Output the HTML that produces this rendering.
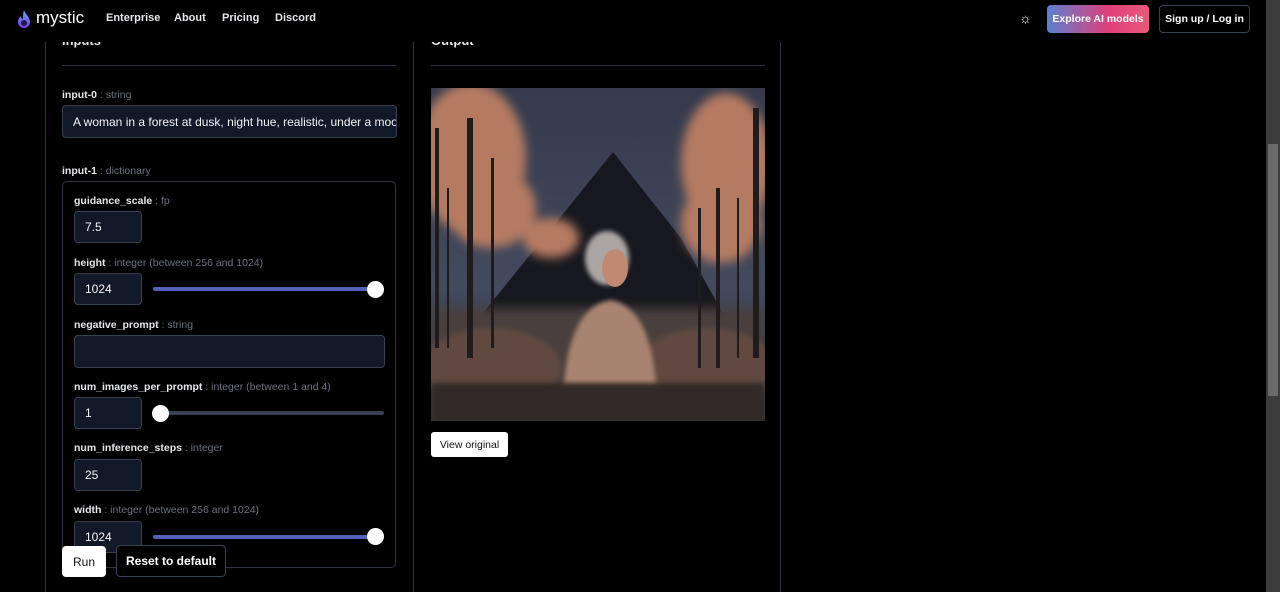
<!DOCTYPE html>
<html><head><meta charset="utf-8">
<style>
*{box-sizing:border-box;margin:0;padding:0}
body{width:1280px;height:592px;background:#000;overflow:hidden;font-family:"Liberation Sans",sans-serif;color:#fff;position:relative}
.abs{position:absolute}
.nav a{position:absolute;top:12px;font-size:11px;font-weight:bold;color:#e5e7eb}
.lbl{position:absolute;font-size:10.5px;font-weight:bold;color:#e5e7eb;white-space:nowrap}
.lbl span{font-weight:normal;color:#6b7280}
.inp{position:absolute;background:#111827;border:1px solid #374151;border-radius:4px;font-size:12px;color:#f3f4f6;padding-left:10px;display:flex;align-items:center;white-space:nowrap;overflow:hidden}
.track{position:absolute;height:4px;border-radius:2px;background:#374151}
.knob{position:absolute;width:17px;height:17px;border-radius:50%;background:#fff}
</style></head><body>
<div class="abs" style="left:45px;top:40px;width:1px;height:552px;background:#2d3340"></div>
<div class="abs" style="left:413px;top:40px;width:1px;height:552px;background:#2d3340"></div>
<div class="abs" style="left:780px;top:40px;width:1px;height:552px;background:#2d3340"></div>
<div class="abs" style="left:62px;top:33px;font-size:13px;font-weight:bold;color:#e5e7eb">Inputs</div>
<div class="abs" style="left:431px;top:33px;font-size:13px;font-weight:bold;color:#e5e7eb">Output</div>
<div class="abs" style="left:0;top:0;width:1266px;height:42px;background:#000"></div>
<svg class="abs" style="left:16px;top:9px" width="16" height="20" viewBox="0 0 16 20"><defs><linearGradient id="fl" x1="0" y1="0" x2="0" y2="1"><stop offset="0" stop-color="#60a5fa"/><stop offset="1" stop-color="#7c3aed"/></linearGradient></defs><path d="M8 1C9 5 14 8 14 13a6 6 0 0 1-12 0c0-3 2-5 3-6 0 2 1 3 2 3 0-4 0-6 1-9z" fill="url(#fl)"/><circle cx="8" cy="14" r="3" fill="#1e1b4b"/></svg>
<div class="abs" style="left:36px;top:8px;font-size:17px;color:#fff">mystic</div>
<div class="nav"><a style="left:106px">Enterprise</a><a style="left:174px">About</a><a style="left:222px">Pricing</a><a style="left:275px">Discord</a></div>
<div class="abs" style="left:1019px;top:10px;font-size:14px;color:#fff">☼</div>
<div class="abs" style="left:1047px;top:5px;width:102px;height:28px;border-radius:4px;background:linear-gradient(90deg,#5b7fd0,#e0407a 60%,#e8587a);font-size:10.5px;font-weight:bold;display:flex;align-items:center;justify-content:center;white-space:nowrap">Explore AI models</div>
<div class="abs" style="left:1159px;top:5px;width:91px;height:28px;border-radius:4px;border:1px solid #374151;font-size:10.5px;font-weight:bold;display:flex;align-items:center;justify-content:center;white-space:nowrap">Sign up / Log in</div>
<div class="abs" style="left:1266px;top:0;width:14px;height:592px;background:#3c3c3c"></div>
<div class="abs" style="left:1268px;top:144px;width:10px;height:252px;background:#6a6a6a"></div>
<div class="abs" style="left:62px;top:65px;width:334px;height:1px;background:#2d3340"></div>
<div class="lbl" style="left:62px;top:89px">input-0 <span>: string</span></div>
<div class="inp" style="left:62px;top:105px;width:335px;height:33px;font-size:12px">A woman in a forest at dusk, night hue, realistic, under a moon</div>
<div class="lbl" style="left:62px;top:165px">input-1 <span>: dictionary</span></div>
<div class="abs" style="left:62px;top:181px;width:334px;height:387px;border:1px solid #2d3340;border-radius:5px"></div>
<div class="lbl" style="left:74px;top:195px">guidance_scale <span>: fp</span></div>
<div class="inp" style="left:74px;top:211px;width:68px;height:32px">7.5</div>
<div class="lbl" style="left:74px;top:257px">height <span>: integer (between 256 and 1024)</span></div>
<div class="inp" style="left:74px;top:273px;width:68px;height:32px">1024</div>
<div class="track" style="left:153px;top:287px;width:231px;background:#5561b8"></div>
<div class="knob" style="left:367px;top:281px"></div>
<div class="lbl" style="left:74px;top:319px">negative_prompt <span>: string</span></div>
<div class="inp" style="left:74px;top:335px;width:311px;height:33px"></div>
<div class="lbl" style="left:74px;top:381px">num_images_per_prompt <span>: integer (between 1 and 4)</span></div>
<div class="inp" style="left:74px;top:397px;width:68px;height:32px">1</div>
<div class="track" style="left:153px;top:411px;width:231px"></div>
<div class="knob" style="left:152px;top:405px"></div>
<div class="lbl" style="left:74px;top:442px">num_inference_steps <span>: integer</span></div>
<div class="inp" style="left:74px;top:459px;width:68px;height:32px">25</div>
<div class="lbl" style="left:74px;top:504px">width <span>: integer (between 256 and 1024)</span></div>
<div class="inp" style="left:74px;top:521px;width:68px;height:32px">1024</div>
<div class="track" style="left:153px;top:535px;width:231px;background:#5561b8"></div>
<div class="knob" style="left:367px;top:528px"></div>
<div class="abs" style="left:62px;top:546px;width:44px;height:31px;background:#fff;border-radius:4px;color:#111;font-size:12px;display:flex;align-items:center;justify-content:center">Run</div>
<div class="abs" style="left:116px;top:545px;width:110px;height:32px;background:#000;border:1px solid #374151;border-radius:4px;font-size:12px;font-weight:bold;display:flex;align-items:center;justify-content:center">Reset to default</div>
<div class="abs" style="left:431px;top:65px;width:334px;height:1px;background:#2d3340"></div>
<svg class="abs" style="left:431px;top:88px" width="334" height="333" viewBox="0 0 334 333">
<defs><filter id="b"><feGaussianBlur stdDeviation="5"/></filter><filter id="b2"><feGaussianBlur stdDeviation="2.5"/></filter>
<linearGradient id="sky" x1="0" y1="0" x2="0" y2="1"><stop offset="0" stop-color="#353a4c"/><stop offset="0.6" stop-color="#434a5d"/><stop offset="1" stop-color="#2a2b33"/></linearGradient></defs>
<rect width="334" height="333" fill="url(#sky)"/>
<path d="M40 240L182 64L250 150L300 240Z" fill="#17181f"/>
<g filter="url(#b)" fill="#b57a62"><ellipse cx="40" cy="70" rx="55" ry="75"/><ellipse cx="60" cy="120" rx="45" ry="40"/><ellipse cx="295" cy="75" rx="45" ry="70"/><ellipse cx="290" cy="135" rx="40" ry="40"/><ellipse cx="120" cy="150" rx="28" ry="20"/></g>
<g filter="url(#b)" fill="#4a403e"><rect x="0" y="220" width="334" height="120"/></g>
<g filter="url(#b2)" fill="#5e4a40"><ellipse cx="60" cy="280" rx="70" ry="40"/><ellipse cx="275" cy="280" rx="70" ry="40"/></g>
<g fill="#201c1e"><rect x="36" y="30" width="6" height="240"/><rect x="4" y="40" width="4" height="220"/><rect x="60" y="70" width="3" height="190"/><rect x="16" y="100" width="2" height="160"/><rect x="322" y="20" width="6" height="250"/><rect x="285" y="100" width="4" height="180"/><rect x="267" y="120" width="3" height="160"/><rect x="306" y="110" width="2" height="160"/></g>
<ellipse cx="176" cy="170" rx="22" ry="27" fill="#aaa6a4" filter="url(#b2)"/>
<ellipse cx="184" cy="180" rx="13" ry="19" fill="#c08a72"/>
<path d="M132 310Q136 218 180 212Q222 220 226 310Z" fill="#a78370" filter="url(#b2)"/>
<rect x="0" y="295" width="334" height="40" fill="#332a28" filter="url(#b2)"/>
</svg>
<div class="abs" style="left:431px;top:432px;width:77px;height:25px;background:#fff;border-radius:3px;color:#111;font-size:10.5px;display:flex;align-items:center;justify-content:center">View original</div>
</body></html>
